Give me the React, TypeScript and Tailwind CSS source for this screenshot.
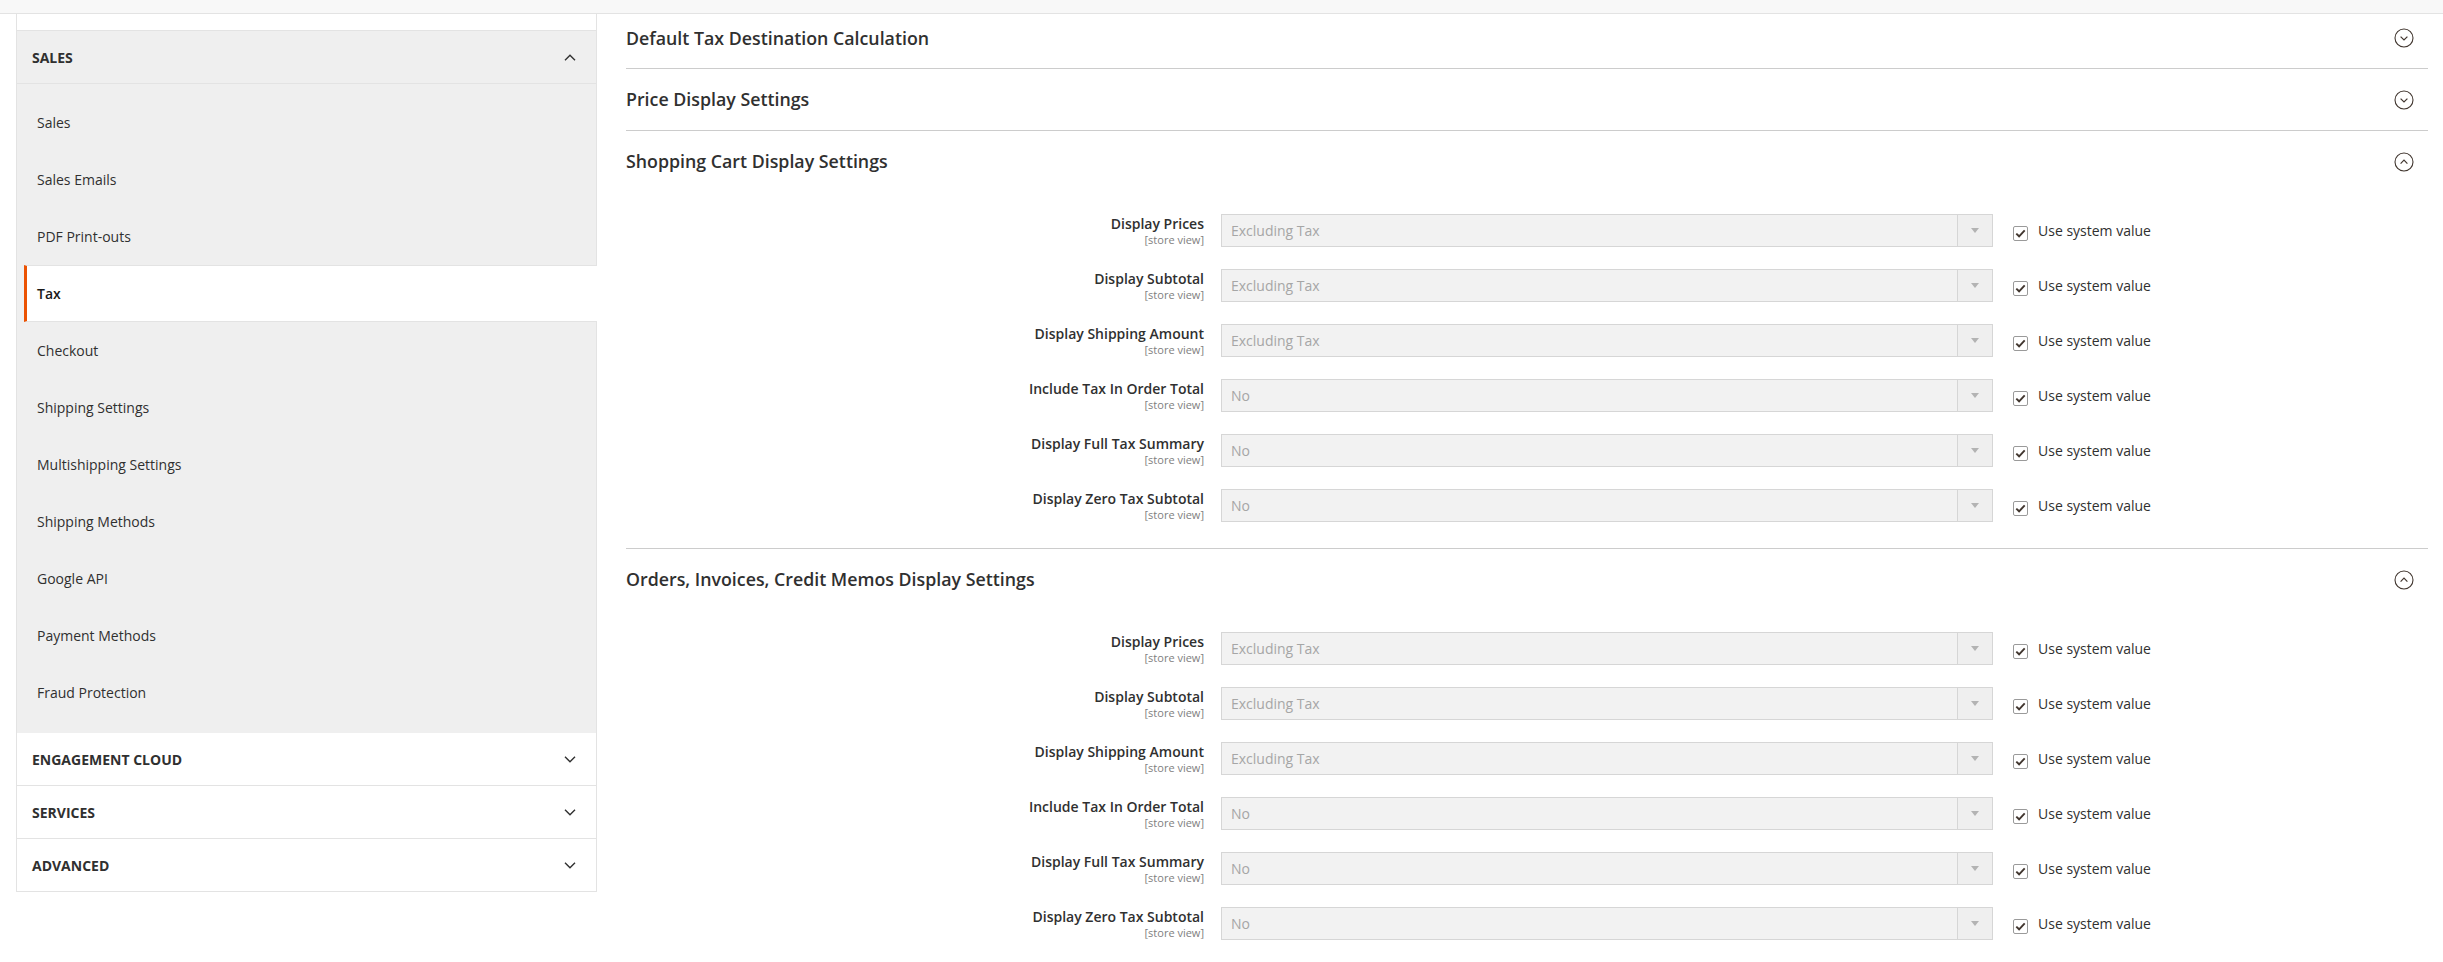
import React from "react"

const rows: [string, string][] = [
  ["Display Prices", "Excluding Tax"],
  ["Display Subtotal", "Excluding Tax"],
  ["Display Shipping Amount", "Excluding Tax"],
  ["Include Tax In Order Total", "No"],
  ["Display Full Tax Summary", "No"],
  ["Display Zero Tax Subtotal", "No"],
]

const navItems = [
  "Sales",
  "Sales Emails",
  "PDF Print-outs",
  "Tax",
  "Checkout",
  "Shipping Settings",
  "Multishipping Settings",
  "Shipping Methods",
  "Google API",
  "Payment Methods",
  "Fraud Protection",
]

function Chevron({ up }: { up?: boolean }) {
  return (
    <svg width="12" height="7" viewBox="0 0 12 7" fill="none">
      <path
        d={up ? "M1 6.2 L6 1.2 L11 6.2" : "M1 0.8 L6 5.8 L11 0.8"}
        stroke="#303030"
        strokeWidth="1.4"
      />
    </svg>
  )
}

function CircleToggle({ open }: { open?: boolean }) {
  return (
    <svg width="20" height="20" viewBox="0 0 20 20" fill="none">
      <circle cx="10" cy="10" r="9" stroke="#41362f" strokeWidth="1.1" />
      <path
        d={open ? "M6.6 11.6 L10 8.2 L13.4 11.6" : "M6.6 8.6 L10 12 L13.4 8.6"}
        stroke="#41362f"
        strokeWidth="1.2"
      />
    </svg>
  )
}

function SectionHead({ title, open, first }: { title: string; open?: boolean; first?: boolean }) {
  return (
    <div
      className={
        first
          ? "h-[55px] pb-[6px] flex items-center justify-between pr-[14px] border-b border-[#cccccc]"
          : open
          ? "h-[61px] flex items-center justify-between pr-[14px]"
          : "h-[62px] flex items-center justify-between pr-[14px] border-b border-[#cccccc]"
      }
    >
      <span className="text-[17.8px] font-semibold text-[#303030]">{title}</span>
      <CircleToggle open={open} />
    </div>
  )
}

function FieldRow({ label, value }: { label: string; value: string }) {
  return (
    <div className="flex items-start h-[33px]">
      <div className="w-[578px] text-right pt-[1px]">
        <div className="text-[14px] leading-[17px] font-semibold text-[#303030]">{label}</div>
        <div className="text-[11px] leading-[15px] text-[#808080]">[store view]</div>
      </div>
      <div className="ml-[17px] w-[772px] h-[33px] flex border border-[#d6d6d6] bg-[#f2f2f2]">
        <div className="flex-1 flex items-center pl-[9px] text-[14px] text-[#a6a6a6]">{value}</div>
        <div className="w-[35px] flex items-center justify-center border-l border-[#d6d6d6] bg-[#efefef]">
          <svg width="8" height="5" viewBox="0 0 8 5">
            <path d="M0 0 H8 L4 5 Z" fill="#b3b3b3" />
          </svg>
        </div>
      </div>
      <div className="ml-[20px] mt-[12px] w-[15px] h-[15px] rounded-[2px] border border-[#9a9a9a] bg-white flex items-center justify-center">
        <svg width="11" height="9" viewBox="0 0 11 9" fill="none">
          <path d="M1.3 4.6 L4.1 7.3 L9.7 1.4" stroke="#41362f" strokeWidth="1.9" />
        </svg>
      </div>
      <div className="ml-[10px] h-[33px] flex items-center text-[14px] text-[#303030]">Use system value</div>
    </div>
  )
}

function Fieldset({ last }: { last?: boolean }) {
  return (
    <div className={last ? "pt-[22px] flex flex-col gap-[22px]" : "pt-[22px] pb-[26px] flex flex-col gap-[22px] border-b border-[#cccccc]"}>
      {rows.map(([l, v]) => (
        <FieldRow key={l} label={l} value={v} />
      ))}
    </div>
  )
}

function Sidebar() {
  return (
    <aside className="w-[581px] shrink-0 text-[#303030]">
      <div className="h-[16px] bg-white border-x border-[#e3e3e3]" />
      <div className="h-[54px] flex items-center justify-between pl-[15px] pr-[20px] bg-[#efefef] border border-[#e3e3e3]">
        <span className="text-[14px] font-bold">SALES</span>
        <Chevron up />
      </div>
      <div className="bg-[#efefef] border-x border-[#e3e3e3] pt-[10px] pb-[12px]">
        {navItems.map((item) =>
          item === "Tax" ? (
            <div
              key={item}
              className="ml-[7px] mr-[-1px] h-[57px] flex items-center pl-[10px] bg-white border-l-[3px] border-l-[#eb5202] border-y border-y-[#e3e3e3] text-[14px] font-semibold text-[#1a1a1a]"
            >
              {item}
            </div>
          ) : (
            <div key={item} className="ml-[7px] h-[57px] flex items-center pl-[13px] text-[14px]">
              {item}
            </div>
          )
        )}
      </div>
      {["ENGAGEMENT CLOUD", "SERVICES", "ADVANCED"].map((t) => (
        <div
          key={t}
          className="h-[53px] flex items-center justify-between pl-[15px] pr-[20px] bg-white border border-t-0 border-[#e3e3e3] first-of-type:border-t"
        >
          <span className="text-[14px] font-bold">{t}</span>
          <Chevron />
        </div>
      ))}
    </aside>
  )
}

export default function App() {
  return (
    <div className="min-h-screen bg-white" style={{ fontFamily: "'Open Sans', 'Noto Sans', sans-serif" }}>
      <div className="h-[14px] bg-[#f8f8f8] border-b border-[#e3e3e3]" />
      <div className="flex pl-[16px]">
        <Sidebar />
        <main className="ml-[29px] w-[1802px]">
          <SectionHead title="Default Tax Destination Calculation" first />
          <SectionHead title="Price Display Settings" />
          <SectionHead title="Shopping Cart Display Settings" open />
          <Fieldset />
          <SectionHead title="Orders, Invoices, Credit Memos Display Settings" open />
          <Fieldset last />
        </main>
      </div>
    </div>
  )
}
